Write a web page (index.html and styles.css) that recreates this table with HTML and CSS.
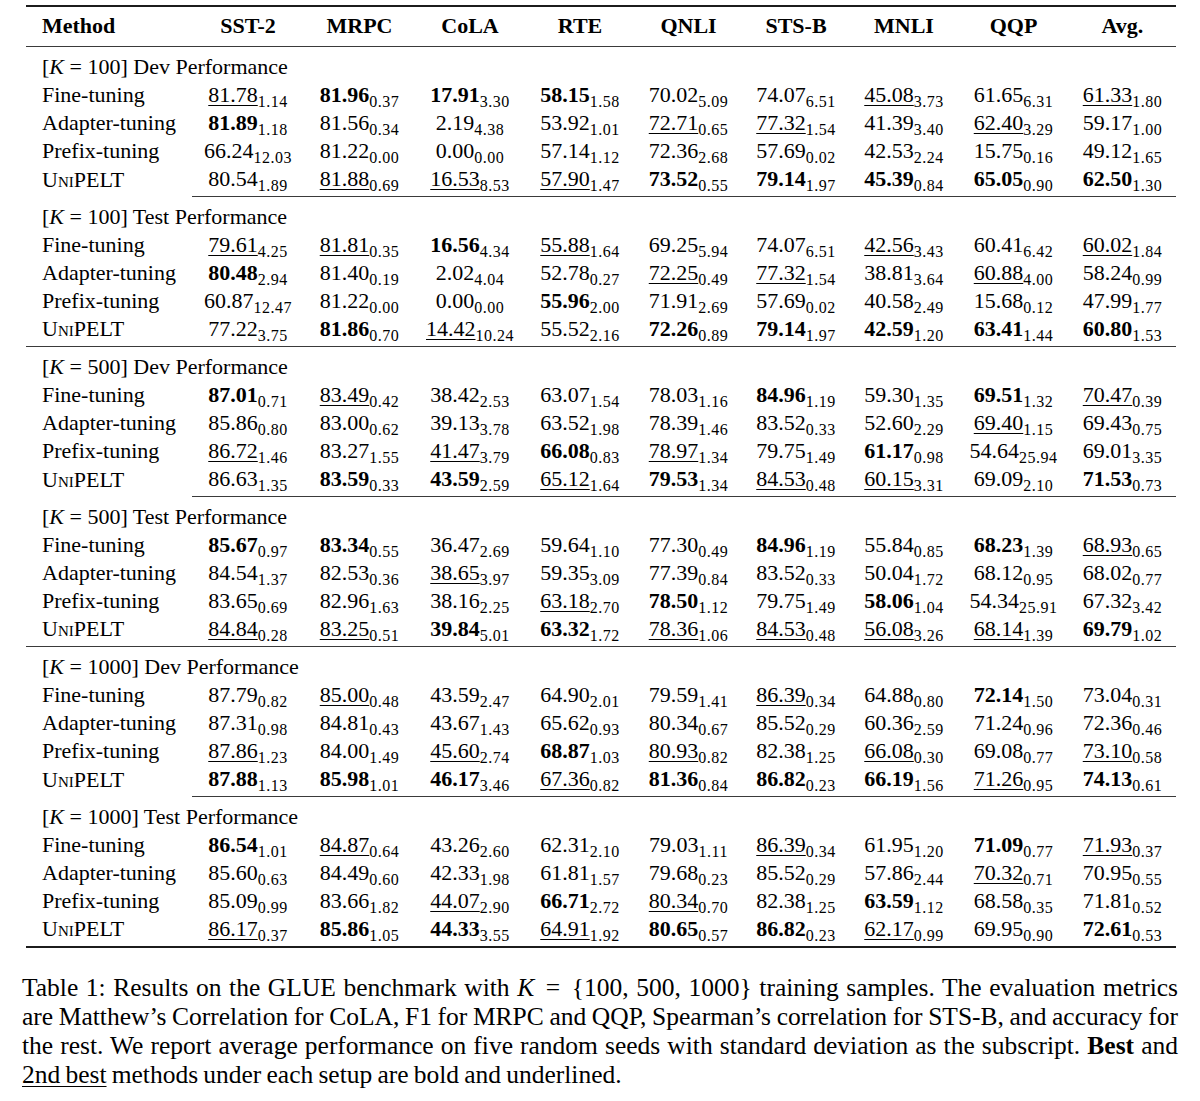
FILE: index.html
```html
<!DOCTYPE html>
<html lang="en">
<head>
<meta charset="utf-8">
<title>Table 1: Results on the GLUE benchmark</title>
<link rel="stylesheet" href="styles.css">
</head>
<body>
<div class="page">
<table class="results">
<colgroup>
<col class="c-method"><col class="c-sst"><col class="c-mrpc"><col class="c-cola"><col class="c-rte"><col class="c-qnli"><col class="c-stsb"><col class="c-mnli"><col class="c-qqp"><col class="c-avg">
</colgroup>
<thead>
<tr><th class="m">Method</th><th>SST-2</th><th>MRPC</th><th>CoLA</th><th>RTE</th><th>QNLI</th><th>STS-B</th><th>MNLI</th><th>QQP</th><th>Avg.</th></tr>
</thead>

<tbody class="dev">
<tr class="label"><td colspan="10">[<i class="mv">K</i> = 100] Dev Performance</td></tr>
<tr><td class="m">Fine-tuning</td><td><u class="second">81.78</u><sub class="sd">1.14</sub></td><td><b class="best">81.96</b><sub class="sd">0.37</sub></td><td><b class="best">17.91</b><sub class="sd">3.30</sub></td><td><b class="best">58.15</b><sub class="sd">1.58</sub></td><td>70.02<sub class="sd">5.09</sub></td><td>74.07<sub class="sd">6.51</sub></td><td><u class="second">45.08</u><sub class="sd">3.73</sub></td><td>61.65<sub class="sd">6.31</sub></td><td><u class="second">61.33</u><sub class="sd">1.80</sub></td></tr>
<tr><td class="m">Adapter-tuning</td><td><b class="best">81.89</b><sub class="sd">1.18</sub></td><td>81.56<sub class="sd">0.34</sub></td><td>2.19<sub class="sd">4.38</sub></td><td>53.92<sub class="sd">1.01</sub></td><td><u class="second">72.71</u><sub class="sd">0.65</sub></td><td><u class="second">77.32</u><sub class="sd">1.54</sub></td><td>41.39<sub class="sd">3.40</sub></td><td><u class="second">62.40</u><sub class="sd">3.29</sub></td><td>59.17<sub class="sd">1.00</sub></td></tr>
<tr><td class="m">Prefix-tuning</td><td>66.24<sub class="sd">12.03</sub></td><td>81.22<sub class="sd">0.00</sub></td><td>0.00<sub class="sd">0.00</sub></td><td>57.14<sub class="sd">1.12</sub></td><td>72.36<sub class="sd">2.68</sub></td><td>57.69<sub class="sd">0.02</sub></td><td>42.53<sub class="sd">2.24</sub></td><td>15.75<sub class="sd">0.16</sub></td><td>49.12<sub class="sd">1.65</sub></td></tr>
<tr><td class="m"><span class="sc">UniPELT</span></td><td>80.54<sub class="sd">1.89</sub></td><td><u class="second">81.88</u><sub class="sd">0.69</sub></td><td><u class="second">16.53</u><sub class="sd">8.53</sub></td><td><u class="second">57.90</u><sub class="sd">1.47</sub></td><td><b class="best">73.52</b><sub class="sd">0.55</sub></td><td><b class="best">79.14</b><sub class="sd">1.97</sub></td><td><b class="best">45.39</b><sub class="sd">0.84</sub></td><td><b class="best">65.05</b><sub class="sd">0.90</sub></td><td><b class="best">62.50</b><sub class="sd">1.30</sub></td></tr>
</tbody>

<tbody class="test">
<tr class="label"><td colspan="10">[<i class="mv">K</i> = 100] Test Performance</td></tr>
<tr><td class="m">Fine-tuning</td><td><u class="second">79.61</u><sub class="sd">4.25</sub></td><td><u class="second">81.81</u><sub class="sd">0.35</sub></td><td><b class="best">16.56</b><sub class="sd">4.34</sub></td><td><u class="second">55.88</u><sub class="sd">1.64</sub></td><td>69.25<sub class="sd">5.94</sub></td><td>74.07<sub class="sd">6.51</sub></td><td><u class="second">42.56</u><sub class="sd">3.43</sub></td><td>60.41<sub class="sd">6.42</sub></td><td><u class="second">60.02</u><sub class="sd">1.84</sub></td></tr>
<tr><td class="m">Adapter-tuning</td><td><b class="best">80.48</b><sub class="sd">2.94</sub></td><td>81.40<sub class="sd">0.19</sub></td><td>2.02<sub class="sd">4.04</sub></td><td>52.78<sub class="sd">0.27</sub></td><td><u class="second">72.25</u><sub class="sd">0.49</sub></td><td><u class="second">77.32</u><sub class="sd">1.54</sub></td><td>38.81<sub class="sd">3.64</sub></td><td><u class="second">60.88</u><sub class="sd">4.00</sub></td><td>58.24<sub class="sd">0.99</sub></td></tr>
<tr><td class="m">Prefix-tuning</td><td>60.87<sub class="sd">12.47</sub></td><td>81.22<sub class="sd">0.00</sub></td><td>0.00<sub class="sd">0.00</sub></td><td><b class="best">55.96</b><sub class="sd">2.00</sub></td><td>71.91<sub class="sd">2.69</sub></td><td>57.69<sub class="sd">0.02</sub></td><td>40.58<sub class="sd">2.49</sub></td><td>15.68<sub class="sd">0.12</sub></td><td>47.99<sub class="sd">1.77</sub></td></tr>
<tr><td class="m"><span class="sc">UniPELT</span></td><td>77.22<sub class="sd">3.75</sub></td><td><b class="best">81.86</b><sub class="sd">0.70</sub></td><td><u class="second">14.42</u><sub class="sd">10.24</sub></td><td>55.52<sub class="sd">2.16</sub></td><td><b class="best">72.26</b><sub class="sd">0.89</sub></td><td><b class="best">79.14</b><sub class="sd">1.97</sub></td><td><b class="best">42.59</b><sub class="sd">1.20</sub></td><td><b class="best">63.41</b><sub class="sd">1.44</sub></td><td><b class="best">60.80</b><sub class="sd">1.53</sub></td></tr>
</tbody>

<tbody class="dev">
<tr class="label"><td colspan="10">[<i class="mv">K</i> = 500] Dev Performance</td></tr>
<tr><td class="m">Fine-tuning</td><td><b class="best">87.01</b><sub class="sd">0.71</sub></td><td><u class="second">83.49</u><sub class="sd">0.42</sub></td><td>38.42<sub class="sd">2.53</sub></td><td>63.07<sub class="sd">1.54</sub></td><td>78.03<sub class="sd">1.16</sub></td><td><b class="best">84.96</b><sub class="sd">1.19</sub></td><td>59.30<sub class="sd">1.35</sub></td><td><b class="best">69.51</b><sub class="sd">1.32</sub></td><td><u class="second">70.47</u><sub class="sd">0.39</sub></td></tr>
<tr><td class="m">Adapter-tuning</td><td>85.86<sub class="sd">0.80</sub></td><td>83.00<sub class="sd">0.62</sub></td><td>39.13<sub class="sd">3.78</sub></td><td>63.52<sub class="sd">1.98</sub></td><td>78.39<sub class="sd">1.46</sub></td><td>83.52<sub class="sd">0.33</sub></td><td>52.60<sub class="sd">2.29</sub></td><td><u class="second">69.40</u><sub class="sd">1.15</sub></td><td>69.43<sub class="sd">0.75</sub></td></tr>
<tr><td class="m">Prefix-tuning</td><td><u class="second">86.72</u><sub class="sd">1.46</sub></td><td>83.27<sub class="sd">1.55</sub></td><td><u class="second">41.47</u><sub class="sd">3.79</sub></td><td><b class="best">66.08</b><sub class="sd">0.83</sub></td><td><u class="second">78.97</u><sub class="sd">1.34</sub></td><td>79.75<sub class="sd">1.49</sub></td><td><b class="best">61.17</b><sub class="sd">0.98</sub></td><td>54.64<sub class="sd">25.94</sub></td><td>69.01<sub class="sd">3.35</sub></td></tr>
<tr><td class="m"><span class="sc">UniPELT</span></td><td>86.63<sub class="sd">1.35</sub></td><td><b class="best">83.59</b><sub class="sd">0.33</sub></td><td><b class="best">43.59</b><sub class="sd">2.59</sub></td><td><u class="second">65.12</u><sub class="sd">1.64</sub></td><td><b class="best">79.53</b><sub class="sd">1.34</sub></td><td><u class="second">84.53</u><sub class="sd">0.48</sub></td><td><u class="second">60.15</u><sub class="sd">3.31</sub></td><td>69.09<sub class="sd">2.10</sub></td><td><b class="best">71.53</b><sub class="sd">0.73</sub></td></tr>
</tbody>

<tbody class="test">
<tr class="label"><td colspan="10">[<i class="mv">K</i> = 500] Test Performance</td></tr>
<tr><td class="m">Fine-tuning</td><td><b class="best">85.67</b><sub class="sd">0.97</sub></td><td><b class="best">83.34</b><sub class="sd">0.55</sub></td><td>36.47<sub class="sd">2.69</sub></td><td>59.64<sub class="sd">1.10</sub></td><td>77.30<sub class="sd">0.49</sub></td><td><b class="best">84.96</b><sub class="sd">1.19</sub></td><td>55.84<sub class="sd">0.85</sub></td><td><b class="best">68.23</b><sub class="sd">1.39</sub></td><td><u class="second">68.93</u><sub class="sd">0.65</sub></td></tr>
<tr><td class="m">Adapter-tuning</td><td>84.54<sub class="sd">1.37</sub></td><td>82.53<sub class="sd">0.36</sub></td><td><u class="second">38.65</u><sub class="sd">3.97</sub></td><td>59.35<sub class="sd">3.09</sub></td><td>77.39<sub class="sd">0.84</sub></td><td>83.52<sub class="sd">0.33</sub></td><td>50.04<sub class="sd">1.72</sub></td><td>68.12<sub class="sd">0.95</sub></td><td>68.02<sub class="sd">0.77</sub></td></tr>
<tr><td class="m">Prefix-tuning</td><td>83.65<sub class="sd">0.69</sub></td><td>82.96<sub class="sd">1.63</sub></td><td>38.16<sub class="sd">2.25</sub></td><td><u class="second">63.18</u><sub class="sd">2.70</sub></td><td><b class="best">78.50</b><sub class="sd">1.12</sub></td><td>79.75<sub class="sd">1.49</sub></td><td><b class="best">58.06</b><sub class="sd">1.04</sub></td><td>54.34<sub class="sd">25.91</sub></td><td>67.32<sub class="sd">3.42</sub></td></tr>
<tr><td class="m"><span class="sc">UniPELT</span></td><td><u class="second">84.84</u><sub class="sd">0.28</sub></td><td><u class="second">83.25</u><sub class="sd">0.51</sub></td><td><b class="best">39.84</b><sub class="sd">5.01</sub></td><td><b class="best">63.32</b><sub class="sd">1.72</sub></td><td><u class="second">78.36</u><sub class="sd">1.06</sub></td><td><u class="second">84.53</u><sub class="sd">0.48</sub></td><td><u class="second">56.08</u><sub class="sd">3.26</sub></td><td><u class="second">68.14</u><sub class="sd">1.39</sub></td><td><b class="best">69.79</b><sub class="sd">1.02</sub></td></tr>
</tbody>

<tbody class="dev">
<tr class="label"><td colspan="10">[<i class="mv">K</i> = 1000] Dev Performance</td></tr>
<tr><td class="m">Fine-tuning</td><td>87.79<sub class="sd">0.82</sub></td><td><u class="second">85.00</u><sub class="sd">0.48</sub></td><td>43.59<sub class="sd">2.47</sub></td><td>64.90<sub class="sd">2.01</sub></td><td>79.59<sub class="sd">1.41</sub></td><td><u class="second">86.39</u><sub class="sd">0.34</sub></td><td>64.88<sub class="sd">0.80</sub></td><td><b class="best">72.14</b><sub class="sd">1.50</sub></td><td>73.04<sub class="sd">0.31</sub></td></tr>
<tr><td class="m">Adapter-tuning</td><td>87.31<sub class="sd">0.98</sub></td><td>84.81<sub class="sd">0.43</sub></td><td>43.67<sub class="sd">1.43</sub></td><td>65.62<sub class="sd">0.93</sub></td><td>80.34<sub class="sd">0.67</sub></td><td>85.52<sub class="sd">0.29</sub></td><td>60.36<sub class="sd">2.59</sub></td><td>71.24<sub class="sd">0.96</sub></td><td>72.36<sub class="sd">0.46</sub></td></tr>
<tr><td class="m">Prefix-tuning</td><td><u class="second">87.86</u><sub class="sd">1.23</sub></td><td>84.00<sub class="sd">1.49</sub></td><td><u class="second">45.60</u><sub class="sd">2.74</sub></td><td><b class="best">68.87</b><sub class="sd">1.03</sub></td><td><u class="second">80.93</u><sub class="sd">0.82</sub></td><td>82.38<sub class="sd">1.25</sub></td><td><u class="second">66.08</u><sub class="sd">0.30</sub></td><td>69.08<sub class="sd">0.77</sub></td><td><u class="second">73.10</u><sub class="sd">0.58</sub></td></tr>
<tr><td class="m"><span class="sc">UniPELT</span></td><td><b class="best">87.88</b><sub class="sd">1.13</sub></td><td><b class="best">85.98</b><sub class="sd">1.01</sub></td><td><b class="best">46.17</b><sub class="sd">3.46</sub></td><td><u class="second">67.36</u><sub class="sd">0.82</sub></td><td><b class="best">81.36</b><sub class="sd">0.84</sub></td><td><b class="best">86.82</b><sub class="sd">0.23</sub></td><td><b class="best">66.19</b><sub class="sd">1.56</sub></td><td><u class="second">71.26</u><sub class="sd">0.95</sub></td><td><b class="best">74.13</b><sub class="sd">0.61</sub></td></tr>
</tbody>

<tbody class="final">
<tr class="label"><td colspan="10">[<i class="mv">K</i> = 1000] Test Performance</td></tr>
<tr><td class="m">Fine-tuning</td><td><b class="best">86.54</b><sub class="sd">1.01</sub></td><td><u class="second">84.87</u><sub class="sd">0.64</sub></td><td>43.26<sub class="sd">2.60</sub></td><td>62.31<sub class="sd">2.10</sub></td><td>79.03<sub class="sd">1.11</sub></td><td><u class="second">86.39</u><sub class="sd">0.34</sub></td><td>61.95<sub class="sd">1.20</sub></td><td><b class="best">71.09</b><sub class="sd">0.77</sub></td><td><u class="second">71.93</u><sub class="sd">0.37</sub></td></tr>
<tr><td class="m">Adapter-tuning</td><td>85.60<sub class="sd">0.63</sub></td><td>84.49<sub class="sd">0.60</sub></td><td>42.33<sub class="sd">1.98</sub></td><td>61.81<sub class="sd">1.57</sub></td><td>79.68<sub class="sd">0.23</sub></td><td>85.52<sub class="sd">0.29</sub></td><td>57.86<sub class="sd">2.44</sub></td><td><u class="second">70.32</u><sub class="sd">0.71</sub></td><td>70.95<sub class="sd">0.55</sub></td></tr>
<tr><td class="m">Prefix-tuning</td><td>85.09<sub class="sd">0.99</sub></td><td>83.66<sub class="sd">1.82</sub></td><td><u class="second">44.07</u><sub class="sd">2.90</sub></td><td><b class="best">66.71</b><sub class="sd">2.72</sub></td><td><u class="second">80.34</u><sub class="sd">0.70</sub></td><td>82.38<sub class="sd">1.25</sub></td><td><b class="best">63.59</b><sub class="sd">1.12</sub></td><td>68.58<sub class="sd">0.35</sub></td><td>71.81<sub class="sd">0.52</sub></td></tr>
<tr><td class="m"><span class="sc">UniPELT</span></td><td><u class="second">86.17</u><sub class="sd">0.37</sub></td><td><b class="best">85.86</b><sub class="sd">1.05</sub></td><td><b class="best">44.33</b><sub class="sd">3.55</sub></td><td><u class="second">64.91</u><sub class="sd">1.92</sub></td><td><b class="best">80.65</b><sub class="sd">0.57</sub></td><td><b class="best">86.82</b><sub class="sd">0.23</sub></td><td><u class="second">62.17</u><sub class="sd">0.99</sub></td><td>69.95<sub class="sd">0.90</sub></td><td><b class="best">72.61</b><sub class="sd">0.53</sub></td></tr>
</tbody>
</table>

<p class="caption">
<span class="ln">Table 1: Results on the GLUE benchmark with <i class="mv">K</i> <span class="rel">=</span> {100, 500, 1000} training samples. The evaluation metrics</span>
<span class="ln">are Matthew’s Correlation for CoLA, F1 for MRPC and QQP, Spearman’s correlation for STS-B, and accuracy for</span>
<span class="ln">the rest. We report average performance on five random seeds with standard deviation as the subscript. <b class="best">Best</b> and</span>
<span class="ln last"><u class="second">2nd best</u> methods under each setup are bold and underlined.</span>
</p>
</div>
</body>
</html>
```

FILE: styles.css
```css
html, body {
  margin: 0;
  padding: 0;
  background: #ffffff;
}

body {
  font-family: "Liberation Serif", "Times New Roman", serif;
  color: #000000;
}

.page {
  width: 1156px;
  padding: 5px 22px 0 22px;
}

.results {
  margin-left: 4px;
  width: 1150px;
  table-layout: fixed;
  border-collapse: separate;
  border-spacing: 0;
  font-size: 22px;
}

.c-method { width: 166px; }
.c-sst { width: 112px; }
.c-mrpc { width: 111px; }
.c-cola { width: 110px; }
.c-rte { width: 110px; }
.c-qnli { width: 107px; }
.c-stsb { width: 108px; }
.c-mnli { width: 108px; }
.c-qqp { width: 111px; }
.c-avg { width: 107px; }

.results th {
  font-weight: bold;
  line-height: 28px;
  padding: 5px 0 6px 0;
  border-top: 2px solid #1c1c1c;
  border-bottom: 1px solid #3a3a3a;
  text-align: center;
  white-space: nowrap;
}

.results th.m {
  text-align: left;
  padding-left: 16px;
}

.results td {
  padding: 0;
  line-height: 28px;
  text-align: center;
  white-space: nowrap;
}

.results td.m {
  text-align: left;
  padding-left: 16px;
}

.results .label td {
  padding-top: 6px;
  padding-left: 16px;
  text-align: left;
}

.results tbody tr:last-child td {
  padding-bottom: 3px;
}

.results tbody.dev tr:last-child td:not(.m) {
  border-bottom: 1px solid #3a3a3a;
}

.results tbody.test tr:last-child td {
  border-bottom: 1px solid #3a3a3a;
}

.results tbody.final tr:last-child td {
  border-bottom: 2px solid #1c1c1c;
}

.sd {
  font-size: 16px;
  letter-spacing: 0.5px;
  vertical-align: -5px;
  line-height: 0;
}

.best {
  font-weight: bold;
}

.second {
  text-decoration: underline;
  text-decoration-thickness: 1px;
  text-underline-offset: 3px;
}

.mv {
  font-style: italic;
}

.sc {
  font-variant: small-caps;
}

.caption {
  margin: 25px 0 0 0;
  font-size: 25.5px;
  line-height: 29px;
  word-spacing: -1.2px;
}

.caption .ln {
  display: block;
  white-space: nowrap;
  text-align: justify;
  text-align-last: justify;
}

.caption .ln.last {
  text-align-last: left;
}

.caption .rel {
  padding: 0 4px;
}
```
